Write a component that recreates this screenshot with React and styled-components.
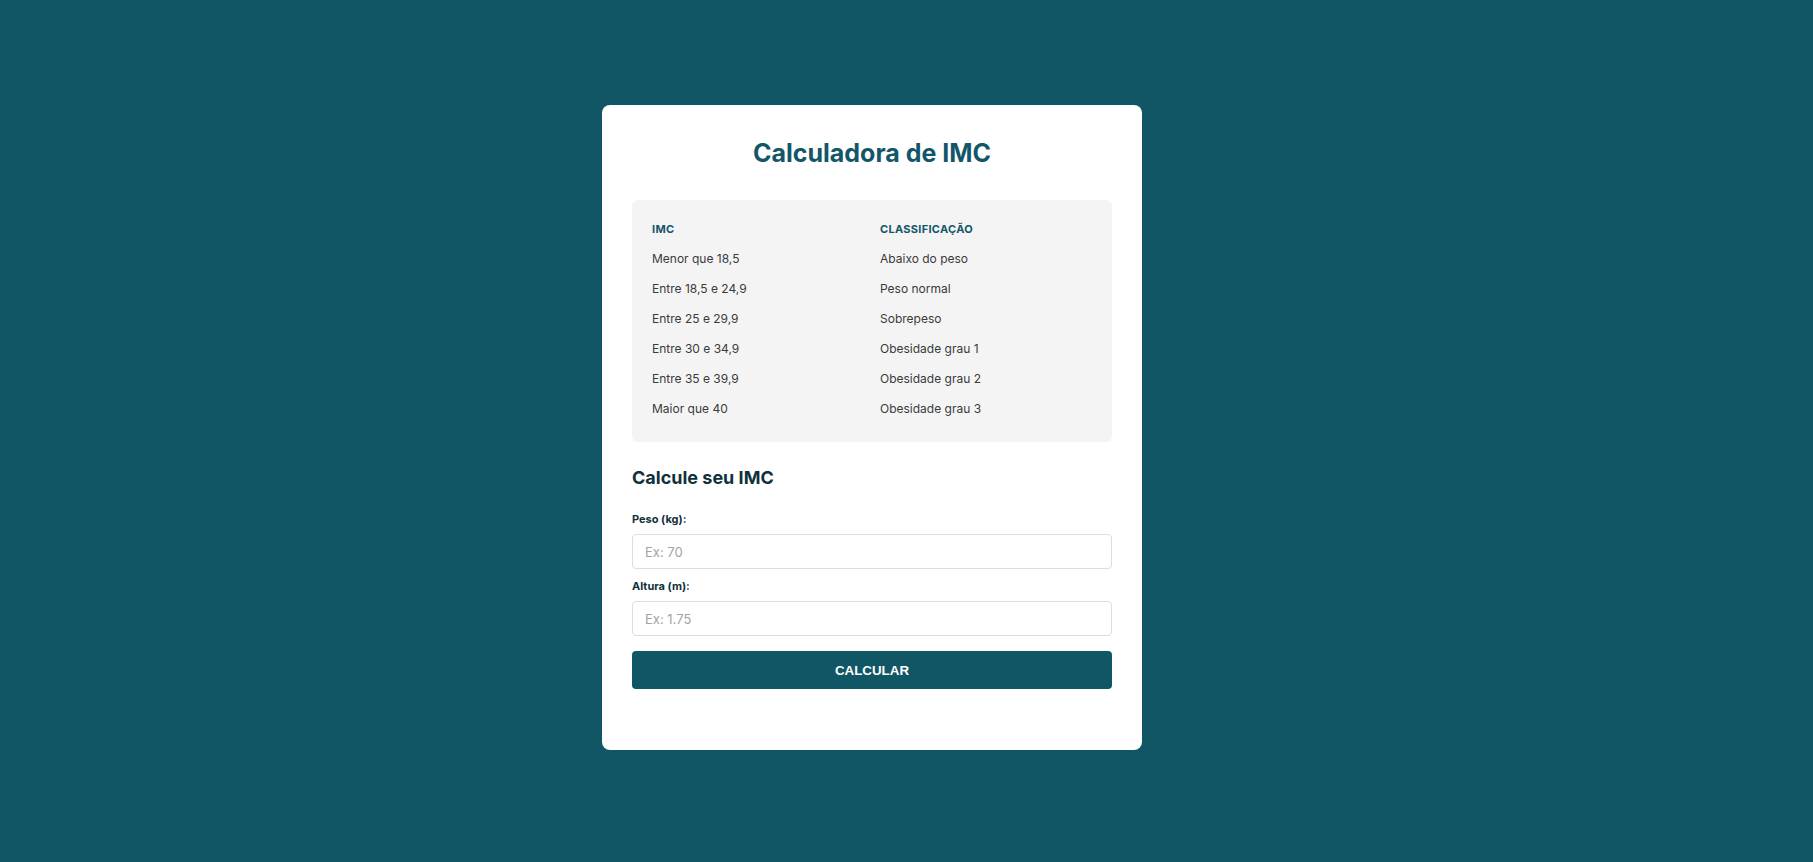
import styled, { createGlobalStyle } from 'styled-components';

const rows = [
  { id: 1, imc: 'Menor que 18,5', label: 'Abaixo do peso' },
  { id: 2, imc: 'Entre 18,5 e 24,9', label: 'Peso normal' },
  { id: 3, imc: 'Entre 25 e 29,9', label: 'Sobrepeso' },
  { id: 4, imc: 'Entre 30 e 34,9', label: 'Obesidade grau 1' },
  { id: 5, imc: 'Entre 35 e 39,9', label: 'Obesidade grau 2' },
  { id: 6, imc: 'Maior que 40', label: 'Obesidade grau 3' },
];

const GlobalStyle = createGlobalStyle`
  * {
    box-sizing: border-box;
  }
  body {
    margin: 0;
    background-color: #115664;
    font-family: Inter, 'Noto Sans', sans-serif;
  }
`;

const App = () => {
  return (
    <>
      <GlobalStyle />
      <Page>
        <Card>
          <Title>Calculadora de IMC</Title>
          <Table>
            <HeadCell>IMC</HeadCell>
            <HeadCell>CLASSIFICAÇÃO</HeadCell>
            {rows.map((item) => {
              const { id, imc, label } = item;
              return (
                <Row key={id}>
                  <Cell>{imc}</Cell>
                  <Cell>{label}</Cell>
                </Row>
              );
            })}
          </Table>
          <SubTitle>Calcule seu IMC</SubTitle>
          <Form onSubmit={(e) => e.preventDefault()}>
            <Label htmlFor="peso">Peso (kg):</Label>
            <Input id="peso" type="text" placeholder="Ex: 70" />
            <Label htmlFor="altura">Altura (m):</Label>
            <Input id="altura" type="text" placeholder="Ex: 1.75" />
            <Button type="submit">CALCULAR</Button>
            <Result />
          </Form>
        </Card>
      </Page>
    </>
  );
};

const Page = styled.main`
  min-height: 100vh;
  display: flex;
  align-items: center;
  justify-content: center;
  padding: 0 69px 7px 0;
`;

const Card = styled.section`
  width: 540px;
  background-color: #ffffff;
  border-radius: 8px;
  padding: 30px;
`;

const Title = styled.h1`
  margin: 3px 0 32px;
  font-size: 25px;
  line-height: 30px;
  font-weight: 700;
  color: #13566a;
  text-align: center;
`;

const Table = styled.div`
  display: grid;
  grid-template-columns: 228px 1fr;
  background-color: #f4f4f4;
  border-radius: 6px;
  padding: 14px 20px 18px;
`;

const Row = styled.div`
  display: contents;
`;

const HeadCell = styled.div`
  height: 30px;
  line-height: 30px;
  font-size: 11px;
  font-weight: 700;
  letter-spacing: 0.3px;
  color: #13566a;
`;

const Cell = styled.div`
  height: 30px;
  line-height: 30px;
  font-size: 12px;
  color: #3a3a3a;
`;

const SubTitle = styled.h2`
  margin: 25px 0 0;
  font-size: 18px;
  line-height: 22px;
  font-weight: 700;
  color: #10313a;
`;

const Form = styled.form`
  display: flex;
  flex-direction: column;
  margin-top: 22px;
`;

const Label = styled.label`
  font-size: 11px;
  line-height: 16px;
  font-weight: 700;
  color: #10313a;
  margin-bottom: 7px;
`;

const Input = styled.input`
  height: 35px;
  width: 100%;
  border: 1px solid #dddddd;
  border-radius: 4px;
  padding: 0 12px;
  margin-bottom: 9px;
  font-family: Inter, 'Noto Sans', sans-serif;
  font-size: 13px;
  color: #333;
  outline: none;
  &::placeholder {
    color: #a3a3a3;
  }
`;

const Button = styled.button`
  margin-top: 6px;
  height: 38px;
  width: 100%;
  border: none;
  border-radius: 4px;
  background-color: #115664;
  color: #ffffff;
  font-family: 'Liberation Sans', Arial, sans-serif;
  font-size: 13.33px;
  font-weight: 700;
  cursor: pointer;
`;

const Result = styled.div`
  min-height: 11px;
  margin-top: 20px;
`;

export default App;
